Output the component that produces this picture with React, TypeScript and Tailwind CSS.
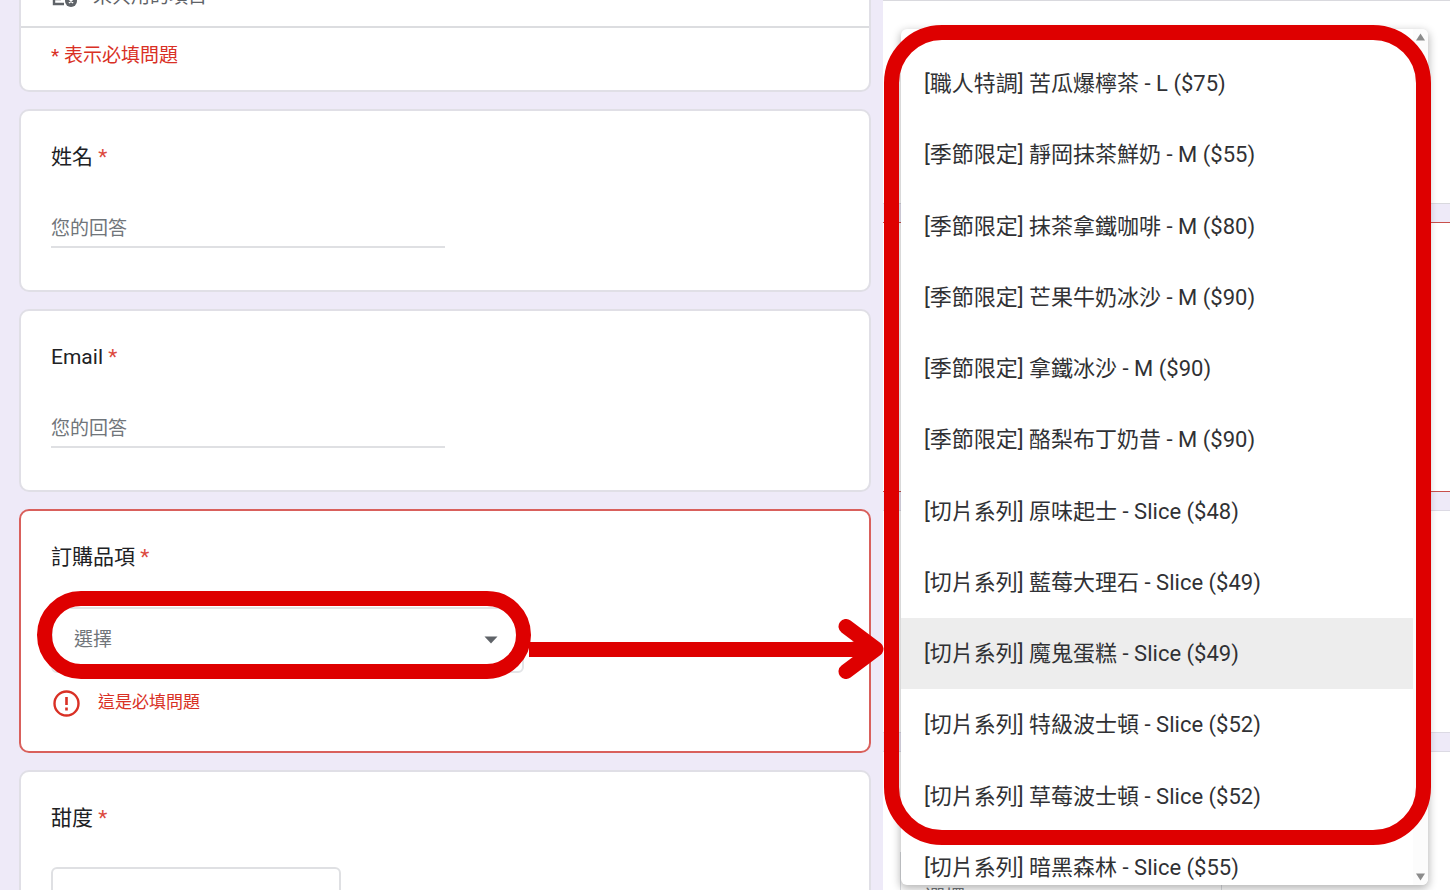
import type { ReactNode } from "react";

const sans = "font-[Roboto,'Noto_Sans_CJK_TC',sans-serif]";

const menuItems = [
  "[職人特調] 苦瓜爆檸茶 - L ($75)",
  "[季節限定] 靜岡抹茶鮮奶 - M ($55)",
  "[季節限定] 抹茶拿鐵咖啡 - M ($80)",
  "[季節限定] 芒果牛奶冰沙 - M ($90)",
  "[季節限定] 拿鐵冰沙 - M ($90)",
  "[季節限定] 酪梨布丁奶昔 - M ($90)",
  "[切片系列] 原味起士 - Slice ($48)",
  "[切片系列] 藍莓大理石 - Slice ($49)",
  "[切片系列] 魔鬼蛋糕 - Slice ($49)",
  "[切片系列] 特級波士頓 - Slice ($52)",
  "[切片系列] 草莓波士頓 - Slice ($52)",
  "[切片系列] 暗黑森林 - Slice ($55)",
];

const activeItem = 8;

function Label({ id, children }: { id: string; children: ReactNode }) {
  return (
    <label htmlFor={id} className="block text-[21px] leading-8 text-[#202124]">
      {children} <span className="text-[#dc4a40]">*</span>
    </label>
  );
}

function TextQuestion({ id, label }: { id: string; label: string }) {
  return (
    <section className="rounded-[10px] border-2 border-[#e0dfe6] bg-white px-[30px] pt-[30px] pb-[42px]">
      <Label id={id}>{label}</Label>
      <input
        id={id}
        type="text"
        placeholder="您的回答"
        className="mt-[37px] block h-[38px] w-[394px] max-w-full border-b-2 border-[#dfe0e3] bg-transparent text-[19px] outline-none placeholder:text-[#70757a]"
      />
    </section>
  );
}

function OrderQuestion() {
  return (
    <section className="relative rounded-[10px] border-2 border-[#d9605c] bg-white px-[30px] pt-[30px] pb-[34px]">
      <Label id="item">訂購品項</Label>
      <div className="relative mt-[34px] w-[473px]">
        <select
          id="item"
          className="block h-[66px] w-full appearance-none rounded-md border-2 border-[#e3e4e7] bg-white px-[21px] text-[19px] text-[#70757a] outline-none"
        >
          <option>選擇</option>
        </select>
        <svg className="pointer-events-none absolute top-[29px] right-[26px]" width="14" height="8" viewBox="0 0 14 8" aria-hidden="true">
          <path d="M0.5 0.5h13L7 7.5z" fill="#5f6368" />
        </svg>
        <div className="pointer-events-none absolute -top-4 -right-[7px] -bottom-[6px] -left-[14px] rounded-[44px] border-[15px] border-[#de0000]" />
      </div>
      <div className="mt-4 flex h-7 items-center gap-[18px] text-[#d93025]">
        <svg className="ml-[2px]" width="27" height="27" viewBox="0 0 27 27" aria-hidden="true">
          <circle cx="13.5" cy="13.5" r="12" fill="none" stroke="currentColor" strokeWidth="2.4" />
          <path d="M13.5 7v8M13.5 17.6v2.8" stroke="currentColor" strokeWidth="2.6" />
        </svg>
        <span className="text-[17px]">這是必填問題</span>
      </div>
      <div className="pointer-events-none absolute top-[108px] -right-[15px] left-[508px] z-20 flex items-center">
        <div className="-mr-4 h-[15px] grow bg-[#de0000]" />
        <svg width="46" height="60" viewBox="0 0 46 60" aria-hidden="true">
          <path d="M16 30H36M8 7.5L38 30L8 52.5" fill="none" stroke="#de0000" strokeWidth="15" strokeLinecap="round" strokeLinejoin="round" />
        </svg>
      </div>
    </section>
  );
}

function FormPane() {
  return (
    <main className="flex flex-col gap-[17px] pr-3 pl-[19px]">
      <section className="rounded-b-[10px] border-2 border-t-0 border-[#e0dfe6] bg-white">
        <div className="-mt-[22px] flex h-[50px] items-center gap-4 border-b-2 border-[#dcdde0] px-[30px] pb-[10px] text-[19px] text-[#5f6368]">
          <svg width="26" height="24" viewBox="0 0 26 24" aria-hidden="true">
            <path d="M13 3H3v16h10M3 14h7" fill="none" stroke="currentColor" strokeWidth="2.4" />
            <circle cx="20" cy="16" r="6" fill="currentColor" />
            <path d="M18 14l4 4M22 14l-4 4" stroke="#fff" strokeWidth="1.5" />
          </svg>
          <span>未共用的項目</span>
        </div>
        <p className="px-[30px] pt-[14px] pb-5 text-[19px] leading-7 text-[#d93025]">* 表示必填問題</p>
      </section>
      <TextQuestion id="name" label="姓名" />
      <TextQuestion id="email" label="Email" />
      <OrderQuestion />
      <section className="rounded-[10px] border-2 border-[#e0dfe6] bg-white px-[30px] pt-[30px] pb-10">
        <Label id="sweetness">甜度</Label>
        <select
          id="sweetness"
          className="mt-[33px] block h-[76px] w-[290px] appearance-none rounded-md border-2 border-[#dfe0e3] bg-white px-[21px] text-[19px] text-[#70757a]"
        >
          <option>選擇</option>
        </select>
      </section>
    </main>
  );
}

function Menu() {
  return (
    <div className="absolute top-[29px] right-[22px] left-[18px] flex h-[856px] overflow-hidden rounded-md bg-white shadow-[0_3px_8px_1px_rgba(0,0,0,0.28)]">
      <ul role="listbox" aria-label="訂購品項" className="mt-[19px] grid h-[855px] grow auto-rows-fr">
        {menuItems.map((item, i) => (
          <li
            key={item}
            role="option"
            aria-selected={i === activeItem}
            className={
              i === activeItem
                ? "flex items-center bg-[#ededed] px-[23px] text-[22px] text-[#303134]"
                : "flex items-center px-[23px] text-[22px] text-[#303134]"
            }
          >
            {item}
          </li>
        ))}
      </ul>
      <div className="flex w-[15px] flex-col items-center justify-between bg-[#fcfcfc] py-1">
        <svg width="9" height="8" viewBox="0 0 9 8" aria-hidden="true">
          <path d="M4.5 0.5L9 7.5H0z" fill="#8b8b8b" />
        </svg>
        <svg width="9" height="8" viewBox="0 0 9 8" aria-hidden="true">
          <path d="M4.5 7.5L9 0.5H0z" fill="#8b8b8b" />
        </svg>
      </div>
    </div>
  );
}

function MenuPane() {
  return (
    <aside className="relative flex flex-col gap-[18px]">
      <div className="h-[204px] shrink-0 border-y border-[#d9d9de] bg-white" />
      <div className="h-[270px] shrink-0 border-y border-[#c8504c] bg-white" />
      <div className="h-[223px] shrink-0 border-y border-[#dcdae4] bg-white" />
      <div className="grow border-t border-[#dcdae4] bg-white px-[17px] pt-[100px]">
        <div className="flex h-[92px] w-[322px] items-center border border-[#dadce0] px-6 text-[20px] text-[#70757a]">選擇</div>
      </div>
      <Menu />
      <div className="pointer-events-none absolute top-[25px] right-[19px] left-px h-[820px] rounded-[58px] border-[15px] border-[#de0000]" />
    </aside>
  );
}

export default function App() {
  return (
    <div className={`grid h-screen grid-cols-[883fr_567fr] grid-rows-[100%] overflow-hidden bg-[#eeeaf8] ${sans}`}>
      <FormPane />
      <MenuPane />
    </div>
  );
}
